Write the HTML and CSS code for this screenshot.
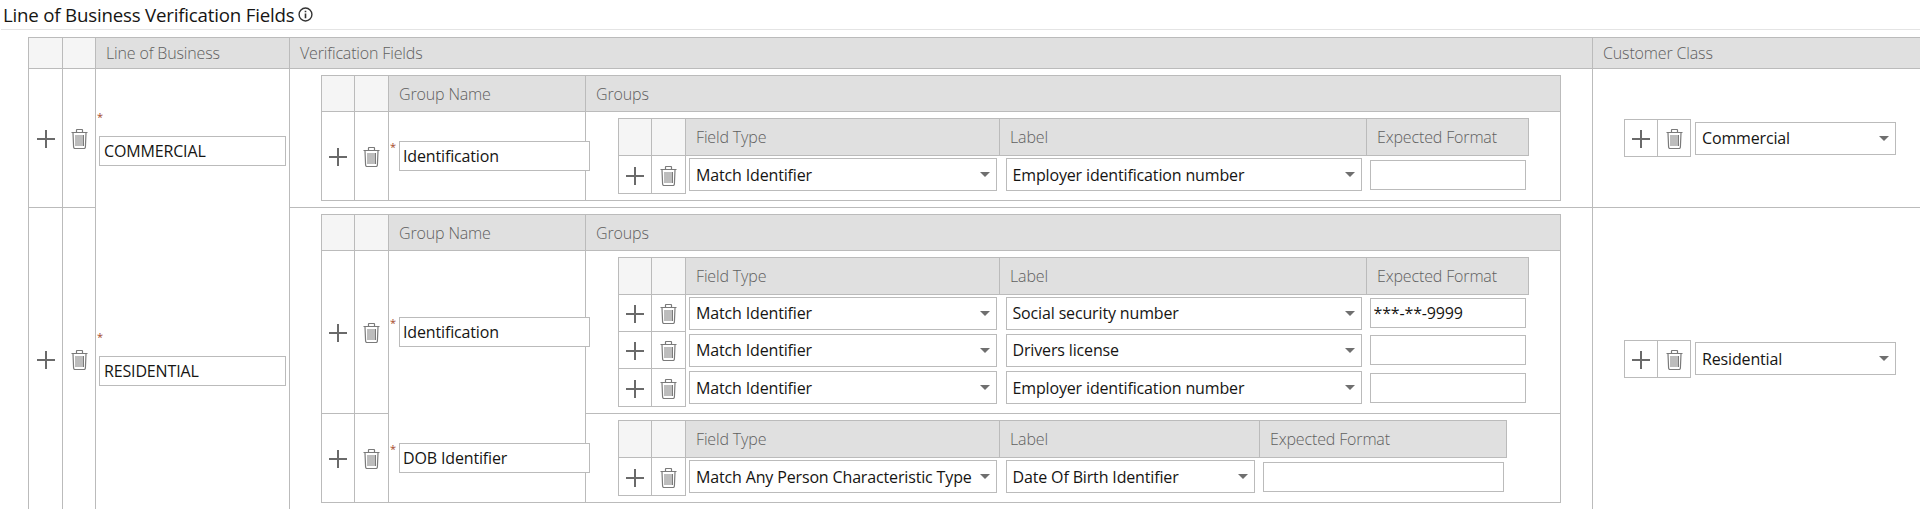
FILE: index.html
```html
<!DOCTYPE html>
<html lang="en">
<head>
<meta charset="utf-8">
<title>Line of Business Verification Fields</title>
<link rel="stylesheet" href="styles.css">
</head>
<body>
<svg class="defs" aria-hidden="true">
  <symbol id="plus" viewBox="0 0 18 18"><path d="M9 0v18M0 9h18" fill="none" stroke="currentColor" stroke-width="2"/></symbol>
  <symbol id="trash" viewBox="0 0 17 20">
    <path d="M5.500 3V1.200q0-.7.7-.7h4.600q.7 0 .7.7V3M.5 3.500h16M2 4l.6 14q0 1.500 1.500 1.500h8.800q1.500 0 1.500-1.500L15 4" fill="none" stroke="currentColor" stroke-width="1.200"/>
    <path d="M5 6v11M7 6v11M9 6v11M11 6v11M12.500 6v11" fill="none" stroke="currentColor" stroke-width="1"/>
  </symbol>
</svg>
<div class="title">Line of Business Verification Fields
  <svg class="info" viewBox="0 0 14 14"><circle cx="7" cy="7" r="6" fill="none" stroke="#333" stroke-width="1.300"/><path d="M7 6v4.500M7 3.500v1.500" stroke="#333" stroke-width="1.500"/></svg>
</div>

<table class="outer">
  <colgroup><col class="o1"><col class="o2"><col class="o3"><col class="o4"><col class="o5"></colgroup>
  <thead>
    <tr><th class="blank"></th><th class="blank"></th><th>Line of Business</th><th>Verification Fields</th><th>Customer Class</th></tr>
  </thead>
  <tbody>
    <tr>
      <td class="ico"><svg class="plus"><use href="#plus"/></svg></td>
      <td class="ico"><svg class="trash"><use href="#trash"/></svg></td>
      <td class="lob lob-top"><span class="req block">*</span><input class="tf lob-in" value="COMMERCIAL"></td>
      <td class="vf">
        <table class="inner">
          <colgroup><col class="i1"><col class="i2"><col class="i3"><col class="i4"></colgroup>
          <thead><tr><th class="blank"></th><th class="blank"></th><th>Group Name</th><th>Groups</th></tr></thead>
          <tbody>
            <tr>
              <td class="ico"><svg class="plus"><use href="#plus"/></svg></td>
              <td class="ico"><svg class="trash"><use href="#trash"/></svg></td>
              <td class="gn"><span class="req">*</span><input class="tf gn-in" value="Identification"></td>
              <td class="gr">
                <table class="fields">
                  <colgroup><col class="f1"><col class="f2"><col class="f3"><col class="f4"><col class="f5"></colgroup>
                  <thead><tr><th class="blank"></th><th class="blank"></th><th>Field Type</th><th>Label</th><th>Expected Format</th></tr></thead>
                  <tbody>
                    <tr class="r38">
                      <td class="ico"><svg class="plus"><use href="#plus"/></svg></td>
                      <td class="ico"><svg class="trash"><use href="#trash"/></svg></td>
                      <td class="c-ft"><span class="sel"><select><option>Match Identifier</option></select></span></td>
                      <td class="c-lb"><span class="sel"><select><option>Employer identification number</option></select></span></td>
                      <td class="c-ef"><input class="tf ef-in"></td>
                    </tr>
                  </tbody>
                </table>
              </td>
            </tr>
          </tbody>
        </table>
      </td>
      <td class="cc">
        <div class="cc-row">
          <span class="btns"><span class="btn"><svg class="plus"><use href="#plus"/></svg></span><span class="btn"><svg class="trash"><use href="#trash"/></svg></span></span>
          <span class="sel cc-sel"><select><option>Commercial</option></select></span>
        </div>
      </td>
    </tr>
    <tr>
      <td class="ico"><svg class="plus"><use href="#plus"/></svg></td>
      <td class="ico"><svg class="trash"><use href="#trash"/></svg></td>
      <td class="lob lob-bottom"><span class="req block">*</span><input class="tf lob-in" value="RESIDENTIAL"></td>
      <td class="vf">
        <table class="inner">
          <colgroup><col class="i1"><col class="i2"><col class="i3"><col class="i4"></colgroup>
          <thead><tr><th class="blank"></th><th class="blank"></th><th>Group Name</th><th>Groups</th></tr></thead>
          <tbody>
            <tr>
              <td class="ico"><svg class="plus"><use href="#plus"/></svg></td>
              <td class="ico"><svg class="trash"><use href="#trash"/></svg></td>
              <td class="gn gn-top"><span class="req">*</span><input class="tf gn-in" value="Identification"></td>
              <td class="gr">
                <table class="fields">
                  <colgroup><col class="f1"><col class="f2"><col class="f3"><col class="f4"><col class="f5"></colgroup>
                  <thead><tr><th class="blank"></th><th class="blank"></th><th>Field Type</th><th>Label</th><th>Expected Format</th></tr></thead>
                  <tbody>
                    <tr class="r37">
                      <td class="ico"><svg class="plus"><use href="#plus"/></svg></td>
                      <td class="ico"><svg class="trash"><use href="#trash"/></svg></td>
                      <td class="c-ft"><span class="sel"><select><option>Match Identifier</option></select></span></td>
                      <td class="c-lb"><span class="sel"><select><option>Social security number</option></select></span></td>
                      <td class="c-ef"><input class="tf ef-in" value="***-**-9999"></td>
                    </tr>
                    <tr class="r37">
                      <td class="ico"><svg class="plus"><use href="#plus"/></svg></td>
                      <td class="ico"><svg class="trash"><use href="#trash"/></svg></td>
                      <td class="c-ft"><span class="sel"><select><option>Match Identifier</option></select></span></td>
                      <td class="c-lb"><span class="sel"><select><option>Drivers license</option></select></span></td>
                      <td class="c-ef"><input class="tf ef-in"></td>
                    </tr>
                    <tr class="r38">
                      <td class="ico"><svg class="plus"><use href="#plus"/></svg></td>
                      <td class="ico"><svg class="trash"><use href="#trash"/></svg></td>
                      <td class="c-ft"><span class="sel"><select><option>Match Identifier</option></select></span></td>
                      <td class="c-lb"><span class="sel"><select><option>Employer identification number</option></select></span></td>
                      <td class="c-ef"><input class="tf ef-in"></td>
                    </tr>
                  </tbody>
                </table>
              </td>
            </tr>
            <tr>
              <td class="ico"><svg class="plus"><use href="#plus"/></svg></td>
              <td class="ico"><svg class="trash"><use href="#trash"/></svg></td>
              <td class="gn gn-bottom"><span class="req">*</span><input class="tf gn-in" value="DOB Identifier"></td>
              <td class="gr">
                <table class="fields fields-short">
                  <colgroup><col class="f1"><col class="f2"><col class="f3"><col class="f4s"><col class="f5s"></colgroup>
                  <thead><tr><th class="blank"></th><th class="blank"></th><th>Field Type</th><th>Label</th><th>Expected Format</th></tr></thead>
                  <tbody>
                    <tr class="r38">
                      <td class="ico"><svg class="plus"><use href="#plus"/></svg></td>
                      <td class="ico"><svg class="trash"><use href="#trash"/></svg></td>
                      <td class="c-ft"><span class="sel"><select><option>Match Any Person Characteristic Type</option></select></span></td>
                      <td class="c-lb"><span class="sel"><select><option>Date Of Birth Identifier</option></select></span></td>
                      <td class="c-ef"><input class="tf ef-in"></td>
                    </tr>
                  </tbody>
                </table>
              </td>
            </tr>
          </tbody>
        </table>
      </td>
      <td class="cc">
        <div class="cc-row">
          <span class="btns"><span class="btn"><svg class="plus"><use href="#plus"/></svg></span><span class="btn"><svg class="trash"><use href="#trash"/></svg></span></span>
          <span class="sel cc-sel"><select><option>Residential</option></select></span>
        </div>
      </td>
    </tr>
  </tbody>
</table>
</body>
</html>
```
FILE: styles.css
```css
* { box-sizing: border-box; }
html, body { margin: 0; background: #fff; overflow: hidden; }
body { font-family: "Open Sans", "Noto Sans", sans-serif; font-size: 16px; letter-spacing: -.15px; color: #161513; }
.defs { display: none; }

.title {
  display: flex; align-items: center; gap: 4px;
  height: 30px; margin: 0 0 7px 1px; padding: 0 0 0 2px;
  font-size: 18.700px; line-height: 30px; letter-spacing: -.2px;
  border-bottom: 1px solid #e4e4e4;
}
.info { width: 15px; height: 15px; }

table { border-collapse: collapse; table-layout: fixed; }
th, td { border: 1px solid #bbb; padding: 0; }
th {
  background: #e0e0e0; color: #5f5f5f;
  font-weight: 300; font-size: 16px; text-align: left; padding-left: 10px;
}
th.blank { background: #f5f5f5; padding: 0; }

.outer { width: 1892px; margin-left: 28px; }
.outer > thead > tr { height: 31px; }
.o1 { width: 34px; } .o2 { width: 33px; } .o3 { width: 194px; } .o4 { width: 1303px; } .o5 { width: 328px; }

.inner { width: 1239px; }
.inner > thead > tr { height: 36px; }
.fields > thead > tr { height: 37px; }
.i1 { width: 33px; } .i2 { width: 34px; } .i3 { width: 197px; } .i4 { width: 975px; }

.fields { width: 910px; }
.fields-short { width: 888px; }
.f1 { width: 33px; } .f2 { width: 34px; } .f3 { width: 314px; } .f4 { width: 367px; } .f5 { width: 162px; }
.f4s { width: 260px; } .f5s { width: 247px; }
.r37 { height: 37px; } .r38 { height: 38px; }

.ico { text-align: center; vertical-align: middle; color: #6a6a6a; line-height: 0; }
.ico svg, .btn svg { position: relative; top: 1px; }
.plus { width: 18px; height: 18px; color: #6a6a6a; }
.trash { width: 17px; height: 20px; color: #7a7a7a; }

.lob { padding: 0 3px; vertical-align: middle; }
.lob-top { border-bottom: none; }
.lob-bottom { border-top: none; }
.vf { padding: 6px 31px; }
.gn { vertical-align: middle; white-space: nowrap; }
.gn-top { border-bottom: none; }
.gn-bottom { border-top: none; }
.gr { padding: 6px 33px 6px 32px; }

.req { color: #a5492a; font-size: 11px; line-height: 13px; vertical-align: top; }
.req.block { display: block; height: 26px; margin-left: -2px; }
.gn .req { display: inline-block; width: 10px; padding-left: 1px; position: relative; top: -1px; }

.tf {
  display: inline-block; height: 30px; padding: 0 4px;
  border: 1px solid #bbb; background: #fff; color: #161513;
  font: inherit; font-size: 16px; letter-spacing: -.15px; border-radius: 0; outline: none;
  position: relative;
}
.lob-in { display: block; width: 187px; }
.gn-in { width: 191px; padding: 0 3px; }
.ef-in { display: block; width: 100%; padding: 0 3px; }

td.c-ft, td.c-lb, td.c-ef { border: none; vertical-align: middle; }
.fields thead th { border: 1px solid #bbb; }
.c-ft { padding: 0 3px; }
.c-lb { padding: 0 5px 0 6px; }
.c-ef { padding: 0 3px; }

.sel { display: block; position: relative; }
.sel select {
  display: block; width: 100%; height: 33px; padding: 0 18px 0 6px;
  appearance: none; -webkit-appearance: none;
  border: 1px solid #bbb; background: #fff; color: #161513;
  font: inherit; font-size: 16px; letter-spacing: -.15px; border-radius: 0; outline: none;
}
.sel::after {
  content: ""; position: absolute; right: 7px; top: 14px;
  border-left: 5px solid transparent; border-right: 5px solid transparent;
  border-top: 5px solid #6f6f6f; pointer-events: none;
}

.cc { padding: 0 0 0 31px; vertical-align: middle; }
.cc-row { display: flex; align-items: center; gap: 4px; }
.btns { display: flex; width: 67px; height: 38px; border: 1px solid #bbb; }
.btn { display: flex; align-items: center; justify-content: center; flex: 1; color: #6a6a6a; }
.btn + .btn { border-left: 1px solid #bbb; }
.cc-sel { width: 201px; }
```
